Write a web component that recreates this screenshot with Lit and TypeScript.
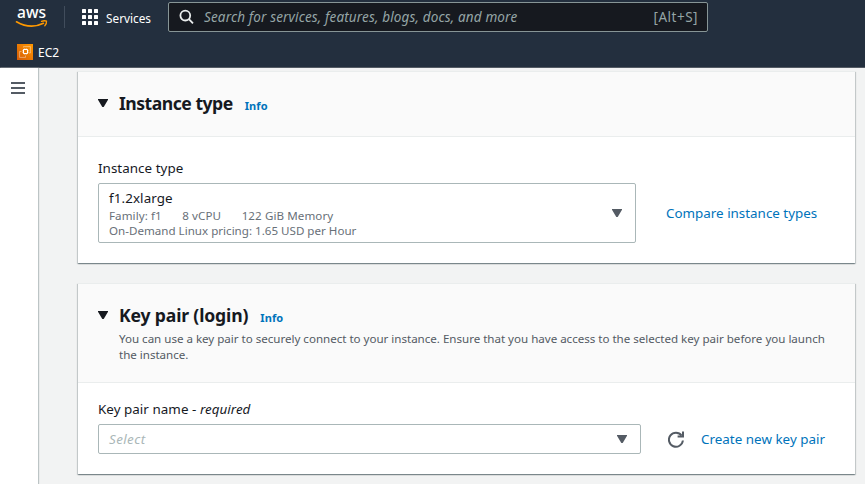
import { LitElement, html, css, svg } from "lit";
import { customElement } from "lit/decorators.js";

const caret = html`<svg class="caret" width="10" height="8" viewBox="0 0 10 8"><path d="M0 0H10V.8L5.7 8H4.3L0 .8Z" fill="currentColor" /></svg>`;

const dots = [0, 6, 12].flatMap((y) =>
  [0, 6, 12].map((x) => svg`<rect x=${x} y=${y} width="4" height="4" rx=".6" fill="#fff" />`)
);

@customElement("aws-header")
class AwsHeader extends LitElement {
  static styles = css`
    :host { display: block; box-sizing: border-box; flex: none; height: 68px; background: #232f3e; border-bottom: 1px solid #545b64; color: #fff; font-family: "Noto Sans", sans-serif; }
    .top { display: flex; align-items: center; height: 34px; padding-left: 16px; }
    .logo { flex: none; width: 32px; height: 20px; overflow: visible; }
    .rule { width: 1px; height: 22px; margin: 0 17px 0 16px; background: #414d5c; }
    .services { margin-left: 8px; width: 62px; font-size: 11.8px; line-height: 16px; white-space: nowrap; padding-top: 1px; }
    .search { box-sizing: border-box; display: flex; align-items: center; width: 540px; height: 30px; padding: 0 9px 0 10px; background: #16191f; border: 1px solid #879596; border-radius: 2px; color: #95a5a6; font-size: 13.5px; white-space: nowrap; }
    .hint { flex: 1; margin-left: 9px; font-style: italic; letter-spacing: .15px; }
    .key { letter-spacing: .5px; }
    .favs { display: flex; align-items: center; gap: 5px; height: 36px; padding-left: 17px; font-size: 12px; }
    .ec2 { padding-top: 1px; }
  `;

  render() {
    return html`
      <div class="top">
        <svg class="logo" viewBox="0 0 32 20">
          <text x="1" y="11.2" font-size="16.5" font-weight="500" fill="#fff" textLength="29" lengthAdjust="spacingAndGlyphs">aws</text>
          <path d="M.5 14.8Q14.5 22.8 27.4 16.3" fill="none" stroke="#f90" stroke-width="1.7" stroke-linecap="round" />
          <path d="M25.5 14.4Q28.5 13.2 30.5 14.2Q30.8 16.8 28.8 18.8" fill="none" stroke="#f90" stroke-width="1.3" stroke-linecap="round" />
        </svg>
        <div class="rule"></div>
        <svg width="16" height="16" viewBox="0 0 16 16">${dots}</svg>
        <div class="services">Services</div>
        <div class="search">
          <svg width="16" height="16" viewBox="0 0 16 16" fill="none" stroke="#eaeded" stroke-width="1.8">
            <circle cx="6.3" cy="6.6" r="4.9" /><path d="M9.9 10.2L14 14.3" />
          </svg>
          <span class="hint">Search for services, features, blogs, docs, and more</span>
          <span class="key">[Alt+S]</span>
        </div>
      </div>
      <div class="favs">
        <svg width="16" height="16" viewBox="0 0 16 16">
          <defs><linearGradient id="g" x1="0" y1="1" x2="1" y2="0"><stop offset="0" stop-color="#d45b07" /><stop offset="1" stop-color="#ff9900" /></linearGradient></defs>
          <rect width="16" height="16" fill="url(#g)" />
          <g fill="none" stroke="#fff">
            <rect x="6.5" y="5.5" width="4" height="4" rx=".4" stroke-width="1.1" />
            <path d="M4.5 7.5H2.6V13.4H8.5V11.5M6.5 3.5V2.6H13.4V9H12" stroke-width=".6" opacity=".65" />
            <path d="M7.7 4V5.5M9.3 4V5.5M7.7 9.5V11M9.3 9.5V11M5 6.7H6.5M5 8.3H6.5M10.5 6.7H12M10.5 8.3H12" stroke-width=".6" opacity=".65" />
          </g>
        </svg>
        <span class="ec2">EC2</span>
      </div>
    `;
  }
}

@customElement("app-root")
class AppRoot extends LitElement {
  static styles = css`
    :host { display: flex; flex-direction: column; width: 865px; height: 484px; overflow: hidden; background: #f2f3f3; color: #16191f; font-family: "Noto Sans", sans-serif; font-size: 13.4px; line-height: 20px; }
    .body { display: flex; flex: 1; min-height: 0; }
    .side { box-sizing: border-box; flex: none; width: 38px; background: #fff; box-shadow: 1px 0 1px #bcc4c5; padding: 14px 11px; }
    .bars { display: block; }
    .main { flex: 1; min-width: 0; display: flex; flex-direction: column; gap: 20px; padding: 3px 10px 0 40px; }
    .card { flex: none; display: flex; flex-direction: column; background: #fff; box-shadow: 0 1px 1px 0 rgba(0,28,36,.3), 1px 1px 1px 0 rgba(0,28,36,.15), -1px 1px 1px 0 rgba(0,28,36,.15); }
    .type { height: 192px; }
    .pair { height: 191px; }
    .head { box-sizing: border-box; display: flex; background: #fafafa; border-bottom: 1px solid #eaeded; padding: 20px; border-top: 1px solid #eaeded; }
    .type .head { height: 66px; }
    .pair .head { height: 100px; }
    .head .caret { flex: none; margin: 7px 11px 0 0; }
    .title { display: flex; align-items: baseline; line-height: 22px; height: 27px; white-space: nowrap; }
    h2 { margin: 0; font-size: 17.6px; line-height: 22px; font-weight: 700; }
    .t1 { letter-spacing: -.5px; }
    .t2 { letter-spacing: -.16px; }
    .info { color: #0073bb; font-size: 11px; font-weight: 700; margin-left: 12px; letter-spacing: .1px; }
    .desc { color: #545b64; font-size: 11.6px; line-height: 16px; white-space: nowrap; letter-spacing: -.022px; }
    .content { padding: 21px 20px 0; }
    .pair .content { padding-top: 16px; }
    .label { height: 25px; letter-spacing: .04px; }
    .row { display: flex; align-items: center; }
    .select { box-sizing: border-box; display: flex; align-items: center; justify-content: space-between; border: 1px solid #aab7b8; border-radius: 2px; color: #545b64; }
    .big { width: 538px; height: 60px; padding: 0 13px 0 10px; }
    .small { width: 543px; height: 30px; padding: 0 13px 0 10px; }
    .value { color: #16191f; line-height: 20px; letter-spacing: .1px; }
    .meta { display: flex; gap: 20.5px; color: #687078; font-size: 11.6px; line-height: 15px; white-space: nowrap; }
    .m1 { letter-spacing: .08px; }
    .placeholder { color: #aab7b8; font-style: italic; letter-spacing: .4px; }
    .link { color: #0073bb; white-space: nowrap; }
    .compare { margin-left: 30px; }
    .create { letter-spacing: .02px; }
    .refresh { flex: none; margin: 0 16px 0 27px; }
  `;

  render() {
    return html`
      <aws-header></aws-header>
      <div class="body">
        <div class="side">
          <svg class="bars" width="14" height="12" viewBox="0 0 14 12"><path d="M0 1H14M0 6H14M0 11H14" stroke="#545b64" stroke-width="2" /></svg>
        </div>
        <div class="main">
          <section class="card type">
            <div class="head">
              ${caret}
              <div class="title"><h2 class="t1">Instance type</h2><span class="info">Info</span></div>
            </div>
            <div class="content">
              <div class="label">Instance type</div>
              <div class="row">
                <div class="select big">
                  <div>
                    <div class="value">f1.2xlarge</div>
                    <div class="meta m1"><span>Family: f1</span><span>8 vCPU</span><span>122 GiB Memory</span></div>
                    <div class="meta">On-Demand Linux pricing: 1.65 USD per Hour</div>
                  </div>
                  ${caret}
                </div>
                <span class="link compare">Compare instance types</span>
              </div>
            </div>
          </section>
          <section class="card pair">
            <div class="head">
              ${caret}
              <div>
                <div class="title"><h2 class="t2">Key pair (login)</h2><span class="info">Info</span></div>
                <div class="desc">You can use a key pair to securely connect to your instance. Ensure that you have access to the selected key pair before you launch<br />the instance.</div>
              </div>
            </div>
            <div class="content">
              <div class="label">Key pair name - <i>required</i></div>
              <div class="row">
                <div class="select small"><span class="placeholder">Select</span>${caret}</div>
                <svg class="refresh" width="17" height="17" viewBox="0 0 17 17" fill="none" stroke="#545b64" stroke-width="2">
                  <path d="M14.9 9.5A7 7 0 1 1 13.6 4.6" /><path d="M15 .5V5.5H9.6" />
                </svg>
                <span class="link create">Create new key pair</span>
              </div>
            </div>
          </section>
        </div>
      </div>
    `;
  }
}
